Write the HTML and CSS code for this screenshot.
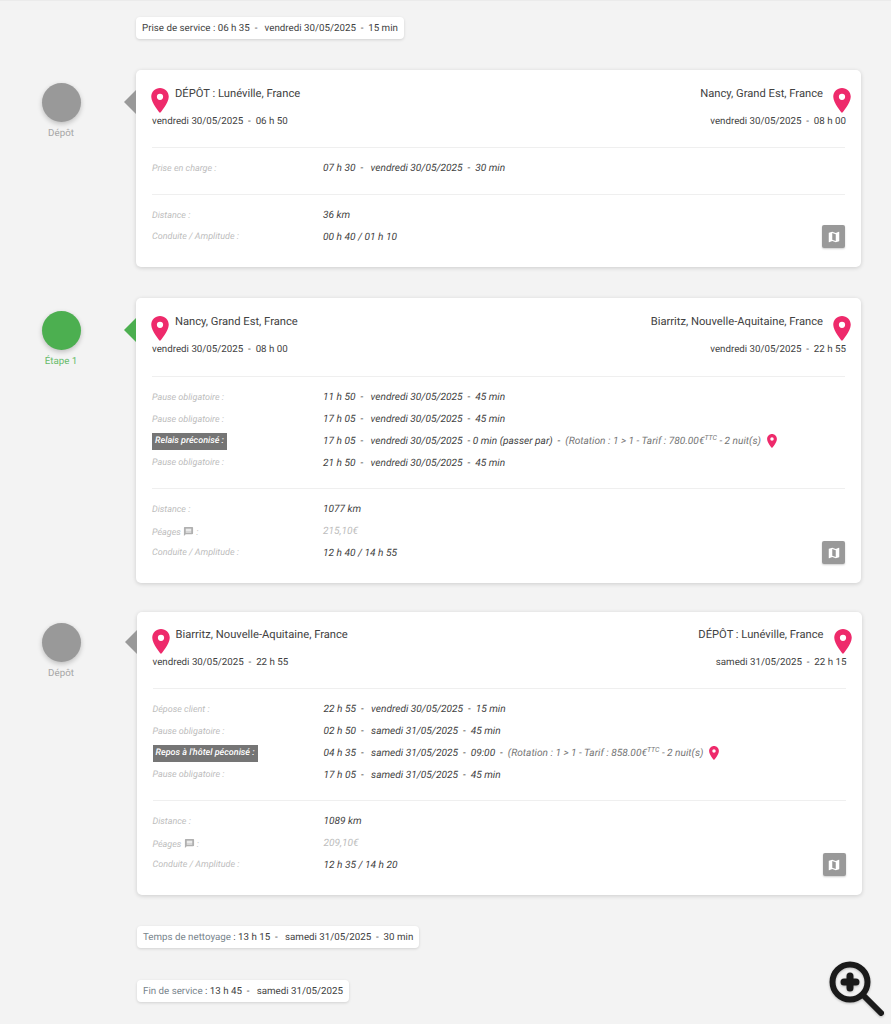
FILE: index.html
```html
<!DOCTYPE html>
<html lang="fr">
<head>
<meta charset="utf-8">
<title>Planning</title>
<link rel="stylesheet" href="styles.css">
</head>
<body>
<svg class="defs" width="0" height="0" aria-hidden="true">
  <symbol id="pin" viewBox="5 2 14 20"><path d="M12 2C8.13 2 5 5.13 5 9c0 5.25 7 13 7 13s7-7.75 7-13c0-3.87-3.13-7-7-7zm0 9.5a2.5 2.5 0 0 1 0-5 2.5 2.5 0 0 1 0 5z"/></symbol>
  <symbol id="map" viewBox="0 0 24 24"><path d="M20.5 3l-.16.03L15 5.1 9 3 3.36 4.9c-.21.07-.36.25-.36.48V20.5c0 .28.22.5.5.5l.16-.03L9 18.9l6 2.1 5.64-1.9c.21-.07.36-.25.36-.48V3.5c0-.28-.22-.5-.5-.5zM15 19l-6-2.11V5l6 2.11V19z"/></symbol>
  <symbol id="msg" viewBox="0 0 24 24"><path d="M20 2H4c-1.1 0-1.99.9-1.99 2L2 22l4-4h14c1.1 0 2-.9 2-2V4c0-1.1-.9-2-2-2zm-2 12H6v-2h12v2zm0-3H6V9h12v2zm0-3H6V6h12v2z"/></symbol>
</svg>
<main class="page">
  <div class="chip">Prise de service : 06 h 35 &nbsp;-&nbsp;&nbsp; vendredi 30/05/2025 &nbsp;-&nbsp; 15 min</div>

  <section class="step">
    <div class="marker"><div class="dot"></div><div class="marker-label">Dépôt</div></div>
    <article class="card">
      <header class="stops">
        <div class="stop">
          <div class="stop-head"><svg class="pin"><use href="#pin"/></svg><span class="stop-title">DÉPÔT : Lunéville, France</span></div>
          <div class="stop-date">vendredi 30/05/2025 &nbsp;-&nbsp; 06 h 50</div>
        </div>
        <div class="stop stop-end">
          <div class="stop-head"><span class="stop-title">Nancy, Grand Est, France</span><svg class="pin"><use href="#pin"/></svg></div>
          <div class="stop-date">vendredi 30/05/2025 &nbsp;-&nbsp; 08 h 00</div>
        </div>
      </header>
      <div class="section">
        <div class="row"><span class="label">Prise en charge :</span><span class="value">07 h 30 &nbsp;-&nbsp;&nbsp; vendredi 30/05/2025 &nbsp;-&nbsp; 30 min</span></div>
      </div>
      <div class="section section-last">
        <div class="rows">
          <div class="row"><span class="label">Distance :</span><span class="value">36 km</span></div>
          <div class="row"><span class="label">Conduite / Amplitude :</span><span class="value">00 h 40 / 01 h 10</span></div>
        </div>
        <button class="map-btn" type="button" aria-label="Carte"><svg class="map-icon"><use href="#map"/></svg></button>
      </div>
    </article>
  </section>

  <section class="step step-green step-tall">
    <div class="marker"><div class="dot"></div><div class="marker-label">Étape 1</div></div>
    <article class="card">
      <header class="stops">
        <div class="stop">
          <div class="stop-head"><svg class="pin"><use href="#pin"/></svg><span class="stop-title">Nancy, Grand Est, France</span></div>
          <div class="stop-date">vendredi 30/05/2025 &nbsp;-&nbsp; 08 h 00</div>
        </div>
        <div class="stop stop-end">
          <div class="stop-head"><span class="stop-title">Biarritz, Nouvelle-Aquitaine, France</span><svg class="pin"><use href="#pin"/></svg></div>
          <div class="stop-date">vendredi 30/05/2025 &nbsp;-&nbsp; 22 h 55</div>
        </div>
      </header>
      <div class="section">
        <div class="row"><span class="label">Pause obligatoire :</span><span class="value">11 h 50 &nbsp;-&nbsp;&nbsp; vendredi 30/05/2025 &nbsp;-&nbsp; 45 min</span></div>
        <div class="row"><span class="label">Pause obligatoire :</span><span class="value">17 h 05 &nbsp;-&nbsp;&nbsp; vendredi 30/05/2025 &nbsp;-&nbsp; 45 min</span></div>
        <div class="row"><span class="label"><span class="tag">Relais préconisé :</span></span><span class="value">17 h 05 &nbsp;-&nbsp;&nbsp; vendredi 30/05/2025 &nbsp;- 0 min (passer par) &nbsp;- &nbsp;<span class="note">(Rotation : 1 &gt; 1 - Tarif : 780.00€<sup class="ttc">TTC</sup> - 2 nuit(s)</span><svg class="pin-small"><use href="#pin"/></svg></span></div>
        <div class="row"><span class="label">Pause obligatoire :</span><span class="value">21 h 50 &nbsp;-&nbsp;&nbsp; vendredi 30/05/2025 &nbsp;-&nbsp; 45 min</span></div>
      </div>
      <div class="section section-last">
        <div class="rows">
          <div class="row"><span class="label">Distance :</span><span class="value">1077 km</span></div>
          <div class="row"><span class="label">Péages <svg class="msg-icon"><use href="#msg"/></svg> :</span><span class="value value-muted">215,10€</span></div>
          <div class="row"><span class="label">Conduite / Amplitude :</span><span class="value">12 h 40 / 14 h 55</span></div>
        </div>
        <button class="map-btn" type="button" aria-label="Carte"><svg class="map-icon"><use href="#map"/></svg></button>
      </div>
    </article>
  </section>

  <section class="step step-third">
    <div class="marker"><div class="dot"></div><div class="marker-label">Dépôt</div></div>
    <article class="card">
      <header class="stops">
        <div class="stop">
          <div class="stop-head"><svg class="pin"><use href="#pin"/></svg><span class="stop-title">Biarritz, Nouvelle-Aquitaine, France</span></div>
          <div class="stop-date">vendredi 30/05/2025 &nbsp;-&nbsp; 22 h 55</div>
        </div>
        <div class="stop stop-end">
          <div class="stop-head"><span class="stop-title">DÉPÔT : Lunéville, France</span><svg class="pin"><use href="#pin"/></svg></div>
          <div class="stop-date">samedi 31/05/2025 &nbsp;-&nbsp; 22 h 15</div>
        </div>
      </header>
      <div class="section">
        <div class="row"><span class="label">Dépose client :</span><span class="value">22 h 55 &nbsp;-&nbsp;&nbsp; vendredi 30/05/2025 &nbsp;-&nbsp; 15 min</span></div>
        <div class="row"><span class="label">Pause obligatoire :</span><span class="value">02 h 50 &nbsp;-&nbsp;&nbsp; samedi 31/05/2025 &nbsp;-&nbsp; 45 min</span></div>
        <div class="row"><span class="label"><span class="tag">Repos à l'hôtel péconisé :</span></span><span class="value">04 h 35 &nbsp;-&nbsp;&nbsp; samedi 31/05/2025 &nbsp;-&nbsp; 09:00 &nbsp;- &nbsp;<span class="note">(Rotation : 1 &gt; 1 - Tarif : 858.00€<sup class="ttc">TTC</sup> - 2 nuit(s)</span><svg class="pin-small"><use href="#pin"/></svg></span></div>
        <div class="row"><span class="label">Pause obligatoire :</span><span class="value">17 h 05 &nbsp;-&nbsp;&nbsp; samedi 31/05/2025 &nbsp;-&nbsp; 45 min</span></div>
      </div>
      <div class="section section-last">
        <div class="rows">
          <div class="row"><span class="label">Distance :</span><span class="value">1089 km</span></div>
          <div class="row"><span class="label">Péages <svg class="msg-icon"><use href="#msg"/></svg> :</span><span class="value value-muted">209,10€</span></div>
          <div class="row"><span class="label">Conduite / Amplitude :</span><span class="value">12 h 35 / 14 h 20</span></div>
        </div>
        <button class="map-btn" type="button" aria-label="Carte"><svg class="map-icon"><use href="#map"/></svg></button>
      </div>
    </article>
  </section>

  <div class="chip chip-after"><span class="chip-key">Temps de nettoyage</span> : 13 h 15 &nbsp;-&nbsp;&nbsp; samedi 31/05/2025 &nbsp;-&nbsp; 30 min</div>
  <div class="chip chip-last"><span class="chip-key">Fin de service</span> : 13 h 45 &nbsp;-&nbsp;&nbsp; samedi 31/05/2025</div>
</main>
<svg class="zoom-tool" viewBox="0 0 56 56" aria-hidden="true">
  <circle cx="21" cy="21" r="17.5" fill="none" stroke="#1a1a1a" stroke-width="6"/>
  <path d="M34 34L52 52" stroke="#1a1a1a" stroke-width="6" stroke-linecap="round"/>
  <path d="M21 15v12M15 21h12" stroke="#1a1a1a" stroke-width="7" stroke-linecap="round"/>
</svg>
</body>
</html>
```
FILE: styles.css
```css
* { box-sizing: border-box; }
html, body { margin: 0; padding: 0; }
body {
  background: #f3f3f3;
  font-family: Roboto, "Liberation Sans", sans-serif;
  color: #424242;
  overflow: hidden;
  height: 1024px;
  border-top: 1px solid #ebebeb;
  text-rendering: geometricPrecision;
}
.defs { position: absolute; }
.page { padding-top: 16px; }

.chip {
  display: table;
  margin-left: 136px;
  height: 22px;
  padding: 1px 6px 0;
  line-height: 21px;
  font-size: 9.75px;
  background: #fff;
  border-radius: 4px;
  box-shadow: 0 1px 3px rgba(0, 0, 0, .14);
  white-space: nowrap;
}
.chip-key { color: #78848c; }
.chip-after { margin-top: 31px; margin-left: 137px; }
.chip-last { margin-top: 32px; margin-left: 137px; }

.step { display: flex; margin-top: 31px; --accent: #999; --accent-text: #a6a6a6; }
.step-green { --accent: #4caf50; --accent-text: #66bb6a; }
.step-third { margin-top: 29px; }

.marker {
  flex: 0 0 122px;
  margin-right: 14px;
  padding-top: 13px;
  display: flex;
  flex-direction: column;
  align-items: center;
}
.step-third .marker { padding-top: 11px; margin-right: 14.5px; }
.dot {
  width: 39px;
  height: 39px;
  border-radius: 50%;
  background: var(--accent);
  box-shadow: 0 2px 5px rgba(0, 0, 0, .22);
}
.marker-label {
  margin-top: 5px;
  font-size: 9.75px;
  line-height: 14px;
  color: var(--accent-text);
}

.card {
  position: relative;
  flex: 0 0 725px;
  padding: 18px 16px 0;
  background: #fff;
  border-radius: 5px;
  box-shadow: 0 1px 4px rgba(0, 0, 0, .16);
}
.step-third .card { padding-top: 17px; }
.card::before {
  content: "";
  position: absolute;
  left: -12px;
  top: 20px;
  border-style: solid;
  border-width: 12px 12px 12px 0;
  border-color: transparent var(--accent) transparent transparent;
}
.step-third .card::before { top: 18px; }

.stops { display: flex; justify-content: space-between; height: 59px; }
.step-tall .stops { height: 60px; }
.stop { display: flex; flex-direction: column; }
.stop-head { display: flex; align-items: flex-start; margin-left: -1px; gap: 6px; height: 25px; }
.stop-end { align-items: flex-end; }
.stop-end .stop-head { margin-left: 0; margin-right: -6px; gap: 10px; }
.stop-title { font-size: 11.2px; line-height: 14px; margin-top: -1px; white-space: nowrap; }
.pin { width: 18px; height: 25px; fill: #ee2a6b; flex: none; }
.stop-date { margin-top: 2px; font-size: 9.75px; line-height: 14px; white-space: nowrap; }
.stop-end .stop-date { margin-right: -1px; }

.section { border-top: 1px solid #efefef; padding: 10px 0 14px; }
.section-last {
  display: flex;
  justify-content: space-between;
  align-items: flex-end;
  padding-bottom: 18.75px;
}
.rows { flex: 1; }
.row { display: flex; align-items: center; height: 21.75px; }
.label {
  flex: 0 0 171px;
  font-size: 9px;
  font-style: italic;
  color: #bdbdbd;
  white-space: nowrap;
}
.tag {
  display: inline-block;
  padding: 0 3px;
  line-height: 17px;
  font-weight: 500;
  color: #fff;
  background: #757575;
}
.value { font-size: 10.15px; font-style: italic; display: flex; align-items: center; white-space: pre; }
.value-muted { color: #bdbdbd; }
.note { color: #757575; }
.ttc { font-size: 7px; line-height: 0; vertical-align: 4px; }
.pin-small { width: 10px; height: 14px; margin-left: 6px; fill: #ee2a6b; }
.msg-icon { width: 11px; height: 11px; fill: #b0b0b0; vertical-align: -2px; }

.map-btn {
  flex: none;
  width: 23px;
  height: 23px;
  padding: 0;
  border: 0;
  border-radius: 2px;
  background: #999;
  box-shadow: 0 1px 2px rgba(0, 0, 0, .2);
  display: flex;
  align-items: center;
  justify-content: center;
}
.map-icon { width: 14px; height: 14px; fill: #fff; }

.zoom-tool {
  position: absolute;
  left: 828.5px;
  top: 961px;
  width: 56px;
  height: 56px;
  filter: drop-shadow(0 1px 1px rgba(0, 0, 0, .25));
}
```
